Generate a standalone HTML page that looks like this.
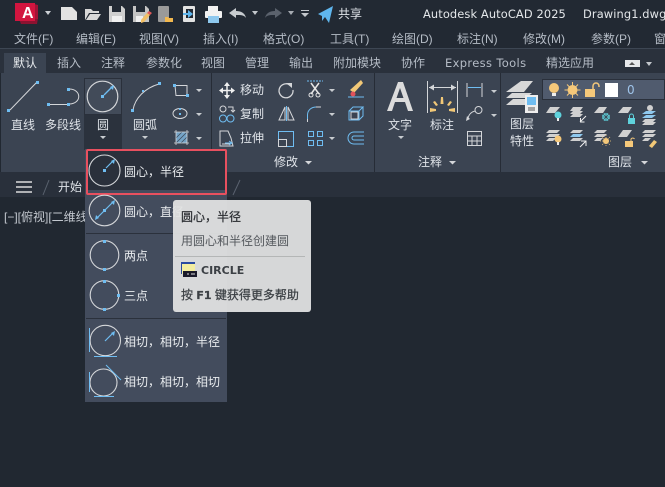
<!DOCTYPE html>
<html><head><meta charset="utf-8"><style>
html,body{margin:0;padding:0;background:#212831;}
#p{position:relative;width:665px;height:487px;overflow:hidden;background:#212831;font-family:"Liberation Sans","Noto Sans CJK SC",sans-serif;font-size:12px;color:#dfe3e8;}
.b{position:absolute;}
.t{position:absolute;white-space:nowrap;line-height:16px;height:16px;}
.m{color:#b5bcc6;}
svg{position:absolute;left:0;top:0;}
</style></head><body><div id="p">
<div class="b" style="left:0;top:0;width:665px;height:48px;background:#222933"></div>
<div class="b" style="left:0;top:48px;width:665px;height:1px;background:#3d4653"></div>
<div class="b" style="left:0;top:49px;width:665px;height:24px;background:#2a313c"></div>
<div class="b" style="left:4px;top:53px;width:42px;height:20px;background:#3b4452"></div>
<div class="b" style="left:1px;top:73px;width:664px;height:99px;background:#3b4452"></div>
<div class="b" style="left:211px;top:73px;width:1px;height:99px;background:#262c36"></div>
<div class="b" style="left:374px;top:73px;width:1px;height:99px;background:#262c36"></div>
<div class="b" style="left:500px;top:73px;width:1px;height:99px;background:#262c36"></div>
<div class="b" style="left:84px;top:78px;width:38px;height:37px;background:#424b59;outline:1px solid #2a303b;outline-offset:-1px"></div>
<div class="b" style="left:84px;top:115px;width:38px;height:35px;background:#2b323d"></div>
<div class="b" style="left:0;top:172px;width:665px;height:25px;background:#29303b"></div>
<div class="b" style="left:542px;top:79px;width:123px;height:21px;background:#505b6e;border:1px solid #2a303b;box-sizing:border-box"></div>

<div class="t" style="left:338px;top:6px;color:#dfe3e8">共享</div>
<div class="t" style="left:423px;top:6px;color:#e4e7ea;font-family:'DejaVu Sans',sans-serif;font-size:11.4px;letter-spacing:.12px">Autodesk AutoCAD 2025</div>
<div class="t" style="left:583px;top:6px;color:#e4e7ea;font-family:'DejaVu Sans',sans-serif;font-size:11.4px;letter-spacing:.12px">Drawing1.dwg</div>

<div class="t m" style="left:14px;top:31px">文件(F)</div>
<div class="t m" style="left:76px;top:31px">编辑(E)</div>
<div class="t m" style="left:139px;top:31px">视图(V)</div>
<div class="t m" style="left:203px;top:31px">插入(I)</div>
<div class="t m" style="left:263px;top:31px">格式(O)</div>
<div class="t m" style="left:330px;top:31px">工具(T)</div>
<div class="t m" style="left:392px;top:31px">绘图(D)</div>
<div class="t m" style="left:457px;top:31px">标注(N)</div>
<div class="t m" style="left:523px;top:31px">修改(M)</div>
<div class="t m" style="left:591px;top:31px">参数(P)</div>
<div class="t m" style="left:654px;top:31px">窗口</div>

<div class="t" style="left:13px;top:55px;color:#e8ebee">默认</div>
<div class="t m" style="left:57px;top:55px">插入</div>
<div class="t m" style="left:101px;top:55px">注释</div>
<div class="t m" style="left:146px;top:55px">参数化</div>
<div class="t m" style="left:201px;top:55px">视图</div>
<div class="t m" style="left:245px;top:55px">管理</div>
<div class="t m" style="left:289px;top:55px">输出</div>
<div class="t m" style="left:333px;top:55px">附加模块</div>
<div class="t m" style="left:401px;top:55px">协作</div>
<div class="t m" style="left:445px;top:55px;font-family:'DejaVu Sans',sans-serif;font-size:11.5px;letter-spacing:.35px">Express Tools</div>
<div class="t m" style="left:546px;top:55px">精选应用</div>

<div class="t" style="left:11px;top:117px">直线</div>
<div class="t" style="left:45px;top:117px">多段线</div>
<div class="t" style="left:97px;top:117px">圆</div>
<div class="t" style="left:133px;top:117px">圆弧</div>
<div class="t" style="left:240px;top:82px">移动</div>
<div class="t" style="left:240px;top:106px">复制</div>
<div class="t" style="left:240px;top:130px">拉伸</div>
<div class="t" style="left:274px;top:154px">修改</div>
<div class="t" style="left:388px;top:117px">文字</div>
<div class="t" style="left:430px;top:117px">标注</div>
<div class="t" style="left:418px;top:154px">注释</div>
<div class="t" style="left:510px;top:116px">图层</div>
<div class="t" style="left:510px;top:133px">特性</div>
<div class="t" style="left:608px;top:154px">图层</div>
<div class="t" style="left:627px;top:82px;font-family:'DejaVu Sans',sans-serif;color:#9fc4ea">0</div>

<div class="t" style="left:58px;top:179px">开始</div>
<div class="t" style="left:4px;top:209px;color:#c3c8cf">[−][俯视][二维线框]</div>

<!-- flyout -->
<div class="b" style="left:85px;top:149px;width:142px;height:253px;background:#434c5d"></div>
<div class="b" style="left:87px;top:151px;width:139px;height:39px;background:#2a303b"></div>
<div class="b" style="left:86px;top:233px;width:140px;height:1px;background:#2b313c"></div>
<div class="b" style="left:86px;top:318px;width:140px;height:1px;background:#2b313c"></div>
<div class="t" style="left:124px;top:164px;color:#e8ebee">圆心，半径</div>
<div class="t" style="left:124px;top:204px;color:#e8ebee">圆心，直径</div>
<div class="t" style="left:124px;top:248px;color:#e8ebee">两点</div>
<div class="t" style="left:124px;top:288px;color:#e8ebee">三点</div>
<div class="t" style="left:124px;top:334px;color:#e8ebee">相切，相切，半径</div>
<div class="t" style="left:124px;top:374px;color:#e8ebee">相切，相切，相切</div>
<div class="b" style="left:86px;top:149px;width:141px;height:46px;border:2px solid #e8505f;border-radius:2px;box-sizing:border-box"></div>

<svg width="665" height="487" viewBox="0 0 665 487" fill="none">
<!-- title bar icons -->
<path d="M19 19h19v-1l-1 6H21z" fill="#8c1230"/><path d="M34 4l4 1v14h-4z" fill="#a31236"/><rect x="15" y="3" width="20" height="18" fill="#d2153f"/>
<path d="M45 11h6l-3 4z" fill="#ccd0d5"/>
<path d="M61 7h11l5 5v8H61z" fill="#e2e2e2"/>
<path d="M85 20V9h6l2 2h6v2H89l-4 7zm1 0l4-6h11l-4 6z" fill="#d8d8d8"/>
<path d="M109 6h13l3 3v13h-16z" fill="#cfcfcf"/><rect x="112" y="6" width="9" height="6" fill="#222933"/><rect x="112" y="16" width="10" height="6" fill="#f0f0f0"/>
<path d="M133 6h13l3 3v13h-16z" fill="#c4c4c4"/><rect x="136" y="6" width="9" height="6" fill="#222933"/><rect x="136" y="16" width="7" height="6" fill="#f0f0f0"/>
<path d="M141 20l6-7 3 2-6 7-3 1z" fill="#f2c066"/><path d="M147 13l2-2 3 2-2 2z" fill="#e05a5a"/>
<rect x="158" y="6" width="11" height="16" rx="1" fill="#9a9a9a"/><path d="M165 17h3l1 1h4v4h-8z" fill="#f2b84f"/>
<rect x="183" y="6" width="12" height="16" rx="1" fill="#e2e2e2"/><rect x="186" y="9" width="7" height="9" fill="#222933"/><path d="M183 13h5v-3l5 4-5 4v-3h-5z" fill="#5fb6ee"/>
<rect x="208" y="6" width="10" height="5" fill="#f2f2f2"/><rect x="205" y="11" width="17" height="7" rx="1" fill="#f2f2f2"/><rect x="208" y="16" width="11" height="7" fill="#8ec8ee"/>
<path d="M229 13l7-5v3c5 0 9 2 10 7-2-3-5-3-10-3v3z" fill="#c8ccd0"/>
<path d="M252 11h6l-3 4z" fill="#c3c7cc"/>
<path d="M282 13l-7-5v3c-5 0-9 2-10 7 2-3 5-3 10-3v3z" fill="#5b626d"/>
<path d="M288 11h6l-3 4z" fill="#a6abb2"/>
<path d="M301 10.500h8" stroke="#c3c7cc"/><path d="M301 13h8l-4 4z" fill="#c3c7cc"/>
<path d="M318 14L333 6l-4 17-4-6-3 4v-5z" fill="#5fb6ee"/>

<path d="M625 60h15v7h-15z" fill="#e6e8ea"/><path d="M629 65h6l-3-3z" fill="#555"/><path d="M646 62h6l-3 4z" fill="#c3c7cc"/>

<!-- draw row -->
<g stroke="#d4d6d9" stroke-width="1">
<path d="M10 110L37 82"/>
<path d="M49 104.500h19M69 89c13 0 13 15 0 15"/>
<circle cx="102.500" cy="96.500" r="15.300" stroke-width="1.200"/>
<path d="M133 110c2-12 12-22 26-26"/>
</g>
<g fill="#6fbdf1"><rect x="7" y="109" width="3" height="3"/><rect x="36" y="81" width="3" height="3"/><rect x="47" y="103" width="3" height="3"/><rect x="67" y="103" width="3" height="3"/><rect x="67" y="88" width="3" height="3"/><rect x="101" y="95" width="3" height="3"/><rect x="131" y="109" width="3" height="3"/><rect x="142" y="90" width="2" height="2"/><rect x="158" y="82" width="3" height="3"/></g>
<path d="M104 95l8-8" stroke="#6fbdf1" stroke-width="1.300"/><path d="M114 85l-1 5-3-3z" fill="#6fbdf1"/>
<path d="M100 136h6l-3 3zM142 136h6l-3 3z" fill="#c8ccd0"/>

<!-- small draw icons -->
<path d="M175 85.500h12v10h-11z" stroke="#d4d6d9"/><rect x="173" y="84" width="3" height="3" fill="#6fbdf1"/><rect x="186" y="94" width="3" height="3" fill="#6fbdf1"/>
<ellipse cx="180" cy="113.500" rx="7" ry="5" stroke="#d4d6d9"/><rect x="179" y="113" width="2" height="2" fill="#6fbdf1"/><rect x="179" y="108" width="2" height="2" fill="#6fbdf1"/>
<rect x="176" y="132" width="11" height="11" fill="#7fb4da" opacity=".85"/><path d="M176 143l11-11M176 138l6-6M181 143l6-6" stroke="#3b4452" stroke-width=".7"/><path d="M174 132h15M174 143h15M176 130v15M187 130v15" stroke="#d4d6d9" stroke-width=".8"/>
<path d="M196 89h6l-3 3zM196 113h6l-3 3zM196 137h6l-3 3z" fill="#c8ccd0"/>

<!-- modify icons -->
<path d="M227 84v13M220.500 90.500h13" stroke="#f0f0f0" stroke-width="1.500"/><path d="M227 82l3 4h-6zM227 99l3-4h-6zM219 90.500l4-3v6zM235 90.500l-4-3v6z" fill="#f0f0f0"/>
<circle cx="223" cy="109" r="3" stroke="#d4d6d9"/><path d="M228 107h5v4" stroke="#d4d6d9"/><path d="M231 110l2 2 2-2" stroke="#d4d6d9"/><circle cx="223" cy="118.500" r="3.500" stroke="#6fbdf1"/><circle cx="230.500" cy="118.500" r="3.500" stroke="#6fbdf1"/>
<path d="M220 131h8l3 7 2 8h-13zM222 144h8" stroke="#d4d6d9"/><path d="M225 143h7M229 141l3 2-3 2" stroke="#6fbdf1"/>
<path d="M290 85a7 7 0 1 0 3 5" stroke="#d4d6d9" stroke-width="1.300"/><path d="M286 83h6v5z" fill="#d4d6d9"/>
<path d="M279 120l6-13v13zM288 107l6 13h-6z" stroke="#d4d6d9"/><path d="M286.500 106v15" stroke="#6fbdf1"/>
<path d="M278.500 131.500h15v15h-15z" stroke="#6fbdf1"/><path d="M278.500 139.500h8v7h-8z" stroke="#d4d6d9"/>
<path d="M307 81h16" stroke="#6fbdf1" stroke-dasharray="2 1"/><path d="M311 83l8 11M319 83l-8 11" stroke="#e6e6e6" stroke-width="1.500"/><circle cx="311" cy="95" r="2" stroke="#e6e6e6"/><circle cx="318" cy="95" r="2" stroke="#e6e6e6"/>
<path d="M307.500 119v-4c0-5 4-8 9-8" stroke="#6fbdf1"/><path d="M316 107h5" stroke="#d4d6d9"/><path d="M307.500 119v3" stroke="#d4d6d9"/>
<path d="M308.500 131.500h5v5h-5zM317.500 131.500h5v5h-5zM308.500 140.500h5v5h-5zM317.500 140.500h5v5h-5z" stroke="#6fbdf1"/>
<path d="M329 89h6l-3 3zM329 113h6l-3 3zM329 137h6l-3 3z" fill="#c8ccd0"/>
<path d="M350 90l11-10 2 3-9 10z" fill="#f2c877"/><circle cx="353" cy="94" r="2.500" fill="#e0525a"/><path d="M348 97h16" stroke="#6fbdf1"/>
<path d="M349 111h10v9h-10zM349 111l4-4h10l-4 4M363 107v9l-4 4" stroke="#6fbdf1"/><rect x="351" y="112" width="7" height="7" stroke="#d4d6d9"/>
<path d="M364 132h-10a5 5 0 0 0 0 12h10M364 136h-10a2 2 0 0 0 0 4h10" stroke="#6fbdf1"/>
<path d="M305 161h7l-3.500 3.500z" fill="#d4d6d9"/>

<!-- annotation -->
<path d="M387 111l11-29h5l10 29h-5l-3-9h-10l-3 9zM396.500 98h7l-3.500-10z" fill="#dcdcdc" fill-rule="evenodd"/>
<path d="M398 136h6l-3 3z" fill="#c8ccd0"/>
<path d="M427.500 81v32M457.500 81v32M429 87.500h27" stroke="#d4d6d9"/><path d="M429 87.500l5-3v6zM456 87.500l-5-3v6z" fill="#d4d6d9"/>
<path d="M441 97h2l.5 7h-3zM433 102l2-1 3 4-2 1zM452 102l-2-1-3 4 2 1zM430 108l6 1v2l-6 1zM455 108l-6 1v2l6 1z" fill="#f2c877"/>
<path d="M467 83v14M482 83v14" stroke="#d4d6d9"/><path d="M468 87.500h13" stroke="#6fbdf1"/>
<circle cx="478.500" cy="110" r="3.500" stroke="#d4d6d9"/><path d="M475 111c-4 1-6 3-7 7" stroke="#d4d6d9"/><path d="M466 121l1-5 3 3z" fill="#d4d6d9"/>
<path d="M491 90h6l-3 3zM491 114h6l-3 3z" fill="#c8ccd0"/>
<path d="M467.500 131.500h14v14h-14zM467.500 136h14M467.500 141h14M472 136v9.500M477 136v9.500" stroke="#d4d6d9"/>
<path d="M449 161h7l-3.500 3.500z" fill="#d4d6d9"/>

<!-- layer panel -->
<path d="M506 92l15-11h12l-9 11z" fill="#d8d8d8"/><path d="M506 98l6-5h20l-6 5z" fill="#d8d8d8"/><path d="M506 105l7-6h18l-6 6z" fill="#d8d8d8"/>
<rect x="525" y="95" width="13" height="18" fill="#eee"/><rect x="527" y="97" width="9" height="8" fill="#6fbdf1"/>
<path d="M528 108h7M528 110h7" stroke="#555"/>
<path d="M641 161h7l-3.500 3.500z" fill="#d4d6d9"/>
<circle cx="554" cy="88" r="5" fill="#f5c87a"/><rect x="552" y="93" width="4" height="3" fill="#eee"/>
<path d="M572.500 82v16M564.500 90h16M567 84.500l11 11M578 84.500l-11 11" stroke="#f5c87a"/><circle cx="572.500" cy="90" r="5" fill="#f5c87a"/>
<rect x="585" y="89" width="10" height="8" fill="#f5c87a"/><path d="M593 89v-3a3 3 0 0 1 6 0v1" stroke="#f5c87a" stroke-width="1.500"/>
<rect x="605" y="83" width="13" height="14" fill="#fff"/>

<g fill="#d0d0d0">
<path d="M546 113l4-6h10l-5 6zM570 111l3-4h10l-3 4zM570 114l3-3h10l-3 3zM570 117l3-3h10l-3 3zM594 113l5-6h8l-4 6zM618 113l5-6h9l-4 6z"/>
<path d="M642 122l3-3h11l-3 3zM642 125l3-3h11l-3 3z"/>
<path d="M546 133l3-3h11l-3 3zM546 137l3-3h11l-3 3zM546 141l3-3h7l-3 3zM570 133l3-3h10l-3 3zM570 141l3-3h10l-3 3zM594 133l3-3h10l-3 3zM594 137l3-3h10l-3 3zM594 141l3-3h6l-3 3zM618 137l5-7h9l-5 7zM642 133l3-3h11l-3 3zM642 137l3-3h11l-3 3zM642 141l3-3h6l-3 3z"/>
<circle cx="650" cy="108" r="3"/>
</g>
<circle cx="558" cy="115" r="3.500" fill="#5fd2dc"/><rect x="557" y="118" width="2" height="3" fill="#eee"/>
<path d="M586 116l-6 6M580.500 118v4h4" stroke="#eee"/>
<circle cx="606" cy="117" r="4" fill="#5fd2dc"/><path d="M602 117h8M606 113v8M603 114l6 6M609 114l-6 6" stroke="#3b4452" stroke-width=".6"/>
<rect x="628" y="118" width="7" height="6" fill="#5fd2dc"/><path d="M629.500 118v-2a2 2 0 0 1 4 0v2" stroke="#5fd2dc"/>
<path d="M642 114l4-3h10l-4 3z" fill="#8ec8ee"/><path d="M642 118l4-3h10l-4 3z" fill="#8ec8ee"/>
<circle cx="558" cy="139" r="3.500" fill="#f5c87a"/><rect x="557" y="142" width="2" height="3" fill="#eee"/>
<path d="M570 137l3-3h10l-3 3z" fill="#8ec8ee"/><path d="M580 147l6-6M581 141h5v5" stroke="#eee"/>
<circle cx="606" cy="141" r="3" fill="#f5c87a"/><path d="M606 135v12M600 141h12M602 137l8 8M610 137l-8 8" stroke="#f5c87a" stroke-dasharray="1 1" stroke-width=".8"/>
<rect x="625" y="141" width="8" height="6" fill="#f5c87a"/><path d="M631 141v-2a2 2 0 0 1 3.500 0" stroke="#f5c87a"/>
<path d="M649 146l5-6 3 2-5 6z" fill="#f2c877"/>

<!-- strip -->
<path d="M16 182h16M16 187h16M16 192h16" stroke="#dcdcdc" stroke-width="1.500"/>
<path d="M43 195l6-15M233 195l7-15" stroke="#5a626f"/>

<!-- flyout icons -->
<g stroke="#d4d6d9" stroke-width="1.100">
<circle cx="104.500" cy="170.500" r="15.500"/><circle cx="104.500" cy="210.500" r="15.300"/><circle cx="104.500" cy="255" r="14.300"/><circle cx="104.500" cy="295" r="14.300"/><circle cx="105.300" cy="340.500" r="15.200"/><circle cx="103.500" cy="382.500" r="13.500"/>
</g>
<g fill="#6fbdf1">
<rect x="103" y="169" width="3" height="3"/>
<rect x="103" y="209" width="3" height="3"/>
<rect x="103" y="240" width="3" height="3"/><rect x="103" y="268" width="3" height="3"/>
<rect x="103" y="280" width="3" height="3"/><rect x="117" y="294" width="3" height="3"/><rect x="103" y="308" width="3" height="3"/>
</g>
<path d="M106 168l7-7" stroke="#6fbdf1" stroke-width="1.200"/><path d="M115 159l-1 5-3-3z" fill="#6fbdf1"/>
<path d="M97 218l16-16" stroke="#6fbdf1" stroke-width="1.200"/><path d="M115 200l-1 5-3-3zM95 220l1-5 3 3z" fill="#6fbdf1"/>
<path d="M105 341l8-8" stroke="#6fbdf1" stroke-width="1.200"/><path d="M115 331l-1 5-3-3z" fill="#6fbdf1"/>
<path d="M89.500 328v24M94 356.500h23M89.500 372v20M94 396.500h20M106 365l15 15" stroke="#6fbdf1"/>

<!-- tooltip -->
<rect x="173" y="200" width="138" height="112" rx="3" fill="#e1e2e2" fill-opacity=".94"/>
<path d="M175 256.500h130" stroke="#b4b6b6"/>
<rect x="181" y="262" width="14" height="12" fill="#f3eda0"/><rect x="181" y="262" width="14" height="2" fill="#2a4aa0"/><rect x="181" y="262" width="1" height="12" fill="#2a4aa0"/><rect x="183" y="271" width="14" height="6" fill="#1a1a2a"/><path d="M187 274h2M191 274h4" stroke="#ddd"/>
</svg>
<div class="t" style="left:181px;top:209px;color:#2e3135;-webkit-text-stroke:.25px #2e3135">圆心，半径</div>
<div class="t" style="left:181px;top:233px;color:#55595e">用圆心和半径创建圆</div>
<div class="t" style="left:201px;top:263px;color:#3c4045;font-weight:bold;font-family:'DejaVu Sans',sans-serif;font-size:11px">CIRCLE</div>
<div class="t" style="left:181px;top:287px;color:#3c4045;-webkit-text-stroke:.25px #3c4045">按 <b style="font-family:'DejaVu Sans',sans-serif;font-size:11px">F1</b> 键获得更多帮助</div>
<div class="t" style="left:22px;top:6px;color:#fff;font-weight:bold;font-size:16px;line-height:16px">A</div>
</div></body></html>
